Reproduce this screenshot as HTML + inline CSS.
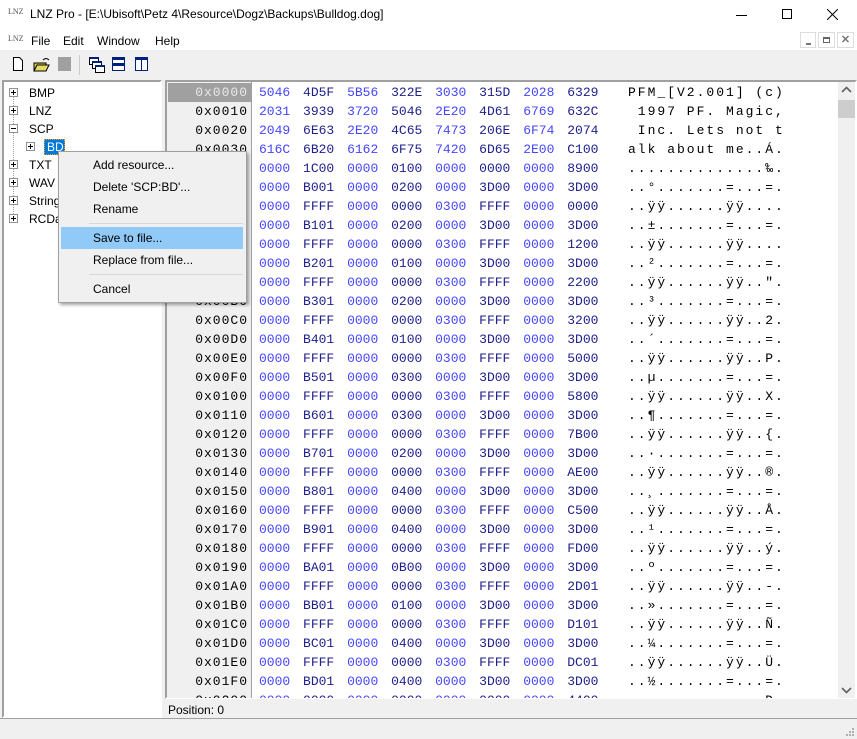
<!DOCTYPE html>
<html><head><meta charset="utf-8"><style>
*{margin:0;padding:0;box-sizing:border-box}
body{width:857px;height:739px;background:#f0f0f0;font-family:"Liberation Sans",sans-serif;font-size:12px;color:#000;position:relative;overflow:hidden}
.a{position:absolute}
.mono{font-family:"Liberation Mono",monospace;font-size:13px;white-space:pre}
.row{position:absolute;height:19px;line-height:19px}
.b{color:#4646ff}.d{color:#1e1e8c}
.mi{position:absolute;left:93px;font-size:12px}
.pl{position:absolute;left:9px;width:9px;height:9px;border:1px solid #919191;background:#fff}
.pl:before{content:"";position:absolute;left:1px;top:3px;width:5px;height:1px;background:#000}
.pl.p:after{content:"";position:absolute;left:3px;top:1px;width:1px;height:5px;background:#000}
.ti{position:absolute;left:29px;font-size:12px}
</style></head><body>
<!-- title bar -->
<div class="a" style="left:0;top:0;width:857px;height:30px;background:#fff"></div>
<div class="a" style="left:8px;top:7px;font-size:8px;color:#555;font-family:'Liberation Serif',serif">LNZ</div>
<div class="a" style="left:30px;top:7px;font-size:12px">LNZ Pro - [E:\Ubisoft\Petz 4\Resource\Dogz\Backups\Bulldog.dog]</div>
<div class="a" style="left:736px;top:15px;width:11px;height:1px;background:#000"></div>
<div class="a" style="left:782px;top:9px;width:10px;height:10px;border:1px solid #000"></div>
<svg class="a" style="left:827px;top:9px" width="11" height="11"><path d="M0 0L11 11M11 0L0 11" stroke="#000"/></svg>
<!-- menu -->
<div class="a" style="left:0;top:30px;width:857px;height:20px;background:#fff"></div>
<div class="a" style="left:8px;top:34px;font-size:8px;color:#555;font-family:'Liberation Serif',serif">LNZ</div>
<div class="a" style="left:31px;top:34px">File</div>
<div class="a" style="left:63px;top:34px">Edit</div>
<div class="a" style="left:97px;top:34px">Window</div>
<div class="a" style="left:155px;top:34px">Help</div>
<div class="a" style="left:800px;top:32px;width:16px;height:16px;border:1px solid #ddd"></div>
<div class="a" style="left:806px;top:43px;width:5px;height:2px;background:#777"></div>
<div class="a" style="left:818px;top:32px;width:17px;height:16px;border:1px solid #ddd"></div>
<div class="a" style="left:823px;top:37px;width:7px;height:6px;border:1px solid #666;border-top-width:2px"></div>
<div class="a" style="left:837px;top:32px;width:17px;height:16px;border:1px solid #ddd;color:#777;font-weight:bold;font-size:11px;text-align:center;line-height:14px">✕</div>
<!-- toolbar -->
<svg class="a" style="left:10px;top:55px" width="150" height="20">
<path d="M3.5 2.5h6l3 3v10h-9z" fill="#fff" stroke="#000"/>
<path d="M24 8h12v8h-12z" fill="#d8c64a" stroke="#000"/><path d="M24 16l3-6h12l-3 6z" fill="#e6dc6a" stroke="#000"/><path d="M33 5q3-3 6 0" stroke="#000" fill="none"/>
<rect x="48" y="2" width="13" height="14" fill="#a0a0a0"/>
<rect x="69" y="0" width="1" height="20" fill="#ccc"/>
<rect x="79.5" y="2.5" width="9" height="7" fill="#fff" stroke="#000"/><rect x="82.5" y="6.5" width="9" height="7" fill="#fff" stroke="#000"/><rect x="85.5" y="10.5" width="9" height="7" fill="#fff" stroke="#000"/>
<rect x="79" y="2" width="10" height="2" fill="#002080"/><rect x="82" y="6" width="10" height="2" fill="#002080"/><rect x="85" y="10" width="10" height="2" fill="#002080"/>
<rect x="102.5" y="2.5" width="12" height="13" fill="#fff" stroke="#002080"/><rect x="102" y="2" width="13" height="3" fill="#002080"/><rect x="102" y="8" width="13" height="3" fill="#002080"/>
<rect x="125.5" y="2.5" width="12" height="13" fill="#fff" stroke="#002080"/><rect x="125" y="2" width="13" height="3" fill="#002080"/><rect x="131" y="2" width="1" height="14" fill="#002080"/>
</svg>
<!-- tree -->
<div class="a" style="left:2px;top:80px;width:160px;height:638px;background:#fff;border:2px solid #a0a0a0;border-right-color:#fff;border-bottom-color:#fff;border-left-color:#a0a0a0"></div>
<div class="a" style="left:13px;top:96px;height:124px;border-left:1px dotted #a0a0a0"></div>
<div class="pl p" style="top:88px"></div><div class="ti" style="top:86px">BMP</div>
<div class="pl p" style="top:106px"></div><div class="ti" style="top:104px">LNZ</div>
<div class="pl" style="top:124px"></div><div class="ti" style="top:122px">SCP</div>
<div class="pl p" style="left:26px;top:142px"></div>
<div class="a" style="left:44px;top:139px;width:21px;height:16px;background:#0078d7;border:1px dotted #f0a000;color:#fff;padding-left:2px;line-height:14px">BD</div>
<div class="pl p" style="top:160px"></div><div class="ti" style="top:158px">TXT</div>
<div class="pl p" style="top:178px"></div><div class="ti" style="top:176px">WAV</div>
<div class="pl p" style="top:196px"></div><div class="ti" style="top:194px">String</div>
<div class="pl p" style="top:214px"></div><div class="ti" style="top:212px">RCData</div>
<!-- hex pane -->
<div class="a" style="left:165px;top:80px;width:692px;height:619px;background:#fff;border:2px solid #a0a0a0;border-right-color:#fff;border-bottom-color:#fff"></div>
<div class="a" style="left:167px;top:82px;width:85px;height:616px;background:#f0f0f0;border-right:1px solid #a0a0a0"></div>
<div class="a" style="left:168px;top:83px;width:83px;height:19px;background:#a0a0a0"></div>
<div class="a" style="left:838px;top:82px;width:17px;height:616px;background:#f0f0f0"></div>
<div class="a" style="left:838px;top:100px;width:17px;height:18px;background:#cdcdcd"></div>
<svg class="a" style="left:841px;top:86px" width="11" height="8"><path d="M1 6l4.5-4.5L10 6" stroke="#606060" stroke-width="1.6" fill="none"/></svg>
<svg class="a" style="left:841px;top:686px" width="11" height="8"><path d="M1 2l4.5 4.5L10 2" stroke="#606060" stroke-width="1.6" fill="none"/></svg>
<div class="a mono" style="left:168px;top:83px;width:670px;height:615px;overflow:hidden;line-height:19px">
<div style="position:absolute;left:0;top:0;width:80px;text-align:right;letter-spacing:1px"><span style="color:#e8e8e8">0x0000</span>
0x0010
0x0020
0x0030
0x0040
0x0050
0x0060
0x0070
0x0080
0x0090
0x00A0
0x00B0
0x00C0
0x00D0
0x00E0
0x00F0
0x0100
0x0110
0x0120
0x0130
0x0140
0x0150
0x0160
0x0170
0x0180
0x0190
0x01A0
0x01B0
0x01C0
0x01D0
0x01E0
0x01F0
0x0200</div>
<div style="position:absolute;left:91px;top:0;word-spacing:5px" id="h"><span class="b">5046</span> <span class="d">4D5F</span> <span class="b">5B56</span> <span class="d">322E</span> <span class="b">3030</span> <span class="d">315D</span> <span class="b">2028</span> <span class="d">6329</span>
<span class="b">2031</span> <span class="d">3939</span> <span class="b">3720</span> <span class="d">5046</span> <span class="b">2E20</span> <span class="d">4D61</span> <span class="b">6769</span> <span class="d">632C</span>
<span class="b">2049</span> <span class="d">6E63</span> <span class="b">2E20</span> <span class="d">4C65</span> <span class="b">7473</span> <span class="d">206E</span> <span class="b">6F74</span> <span class="d">2074</span>
<span class="b">616C</span> <span class="d">6B20</span> <span class="b">6162</span> <span class="d">6F75</span> <span class="b">7420</span> <span class="d">6D65</span> <span class="b">2E00</span> <span class="d">C100</span>
<span class="b">0000</span> <span class="d">1C00</span> <span class="b">0000</span> <span class="d">0100</span> <span class="b">0000</span> <span class="d">0000</span> <span class="b">0000</span> <span class="d">8900</span>
<span class="b">0000</span> <span class="d">B001</span> <span class="b">0000</span> <span class="d">0200</span> <span class="b">0000</span> <span class="d">3D00</span> <span class="b">0000</span> <span class="d">3D00</span>
<span class="b">0000</span> <span class="d">FFFF</span> <span class="b">0000</span> <span class="d">0000</span> <span class="b">0300</span> <span class="d">FFFF</span> <span class="b">0000</span> <span class="d">0000</span>
<span class="b">0000</span> <span class="d">B101</span> <span class="b">0000</span> <span class="d">0200</span> <span class="b">0000</span> <span class="d">3D00</span> <span class="b">0000</span> <span class="d">3D00</span>
<span class="b">0000</span> <span class="d">FFFF</span> <span class="b">0000</span> <span class="d">0000</span> <span class="b">0300</span> <span class="d">FFFF</span> <span class="b">0000</span> <span class="d">1200</span>
<span class="b">0000</span> <span class="d">B201</span> <span class="b">0000</span> <span class="d">0100</span> <span class="b">0000</span> <span class="d">3D00</span> <span class="b">0000</span> <span class="d">3D00</span>
<span class="b">0000</span> <span class="d">FFFF</span> <span class="b">0000</span> <span class="d">0000</span> <span class="b">0300</span> <span class="d">FFFF</span> <span class="b">0000</span> <span class="d">2200</span>
<span class="b">0000</span> <span class="d">B301</span> <span class="b">0000</span> <span class="d">0200</span> <span class="b">0000</span> <span class="d">3D00</span> <span class="b">0000</span> <span class="d">3D00</span>
<span class="b">0000</span> <span class="d">FFFF</span> <span class="b">0000</span> <span class="d">0000</span> <span class="b">0300</span> <span class="d">FFFF</span> <span class="b">0000</span> <span class="d">3200</span>
<span class="b">0000</span> <span class="d">B401</span> <span class="b">0000</span> <span class="d">0100</span> <span class="b">0000</span> <span class="d">3D00</span> <span class="b">0000</span> <span class="d">3D00</span>
<span class="b">0000</span> <span class="d">FFFF</span> <span class="b">0000</span> <span class="d">0000</span> <span class="b">0300</span> <span class="d">FFFF</span> <span class="b">0000</span> <span class="d">5000</span>
<span class="b">0000</span> <span class="d">B501</span> <span class="b">0000</span> <span class="d">0300</span> <span class="b">0000</span> <span class="d">3D00</span> <span class="b">0000</span> <span class="d">3D00</span>
<span class="b">0000</span> <span class="d">FFFF</span> <span class="b">0000</span> <span class="d">0000</span> <span class="b">0300</span> <span class="d">FFFF</span> <span class="b">0000</span> <span class="d">5800</span>
<span class="b">0000</span> <span class="d">B601</span> <span class="b">0000</span> <span class="d">0300</span> <span class="b">0000</span> <span class="d">3D00</span> <span class="b">0000</span> <span class="d">3D00</span>
<span class="b">0000</span> <span class="d">FFFF</span> <span class="b">0000</span> <span class="d">0000</span> <span class="b">0300</span> <span class="d">FFFF</span> <span class="b">0000</span> <span class="d">7B00</span>
<span class="b">0000</span> <span class="d">B701</span> <span class="b">0000</span> <span class="d">0200</span> <span class="b">0000</span> <span class="d">3D00</span> <span class="b">0000</span> <span class="d">3D00</span>
<span class="b">0000</span> <span class="d">FFFF</span> <span class="b">0000</span> <span class="d">0000</span> <span class="b">0300</span> <span class="d">FFFF</span> <span class="b">0000</span> <span class="d">AE00</span>
<span class="b">0000</span> <span class="d">B801</span> <span class="b">0000</span> <span class="d">0400</span> <span class="b">0000</span> <span class="d">3D00</span> <span class="b">0000</span> <span class="d">3D00</span>
<span class="b">0000</span> <span class="d">FFFF</span> <span class="b">0000</span> <span class="d">0000</span> <span class="b">0300</span> <span class="d">FFFF</span> <span class="b">0000</span> <span class="d">C500</span>
<span class="b">0000</span> <span class="d">B901</span> <span class="b">0000</span> <span class="d">0400</span> <span class="b">0000</span> <span class="d">3D00</span> <span class="b">0000</span> <span class="d">3D00</span>
<span class="b">0000</span> <span class="d">FFFF</span> <span class="b">0000</span> <span class="d">0000</span> <span class="b">0300</span> <span class="d">FFFF</span> <span class="b">0000</span> <span class="d">FD00</span>
<span class="b">0000</span> <span class="d">BA01</span> <span class="b">0000</span> <span class="d">0B00</span> <span class="b">0000</span> <span class="d">3D00</span> <span class="b">0000</span> <span class="d">3D00</span>
<span class="b">0000</span> <span class="d">FFFF</span> <span class="b">0000</span> <span class="d">0000</span> <span class="b">0300</span> <span class="d">FFFF</span> <span class="b">0000</span> <span class="d">2D01</span>
<span class="b">0000</span> <span class="d">BB01</span> <span class="b">0000</span> <span class="d">0100</span> <span class="b">0000</span> <span class="d">3D00</span> <span class="b">0000</span> <span class="d">3D00</span>
<span class="b">0000</span> <span class="d">FFFF</span> <span class="b">0000</span> <span class="d">0000</span> <span class="b">0300</span> <span class="d">FFFF</span> <span class="b">0000</span> <span class="d">D101</span>
<span class="b">0000</span> <span class="d">BC01</span> <span class="b">0000</span> <span class="d">0400</span> <span class="b">0000</span> <span class="d">3D00</span> <span class="b">0000</span> <span class="d">3D00</span>
<span class="b">0000</span> <span class="d">FFFF</span> <span class="b">0000</span> <span class="d">0000</span> <span class="b">0300</span> <span class="d">FFFF</span> <span class="b">0000</span> <span class="d">DC01</span>
<span class="b">0000</span> <span class="d">BD01</span> <span class="b">0000</span> <span class="d">0400</span> <span class="b">0000</span> <span class="d">3D00</span> <span class="b">0000</span> <span class="d">3D00</span>
<span class="b">0000</span> <span class="d">0000</span> <span class="b">0000</span> <span class="d">0000</span> <span class="b">0000</span> <span class="d">0000</span> <span class="b">0000</span> <span class="d">4400</span></div>
<div style="position:absolute;left:460px;top:0;letter-spacing:2px">PFM_[V2.001] (c)
 1997 PF. Magic,
 Inc. Lets not t
alk about me..Á.
..............‰.
..°.......=...=.
..ÿÿ......ÿÿ....
..±.......=...=.
..ÿÿ......ÿÿ....
..².......=...=.
..ÿÿ......ÿÿ..".
..³.......=...=.
..ÿÿ......ÿÿ..2.
..´.......=...=.
..ÿÿ......ÿÿ..P.
..µ.......=...=.
..ÿÿ......ÿÿ..X.
..¶.......=...=.
..ÿÿ......ÿÿ..{.
..·.......=...=.
..ÿÿ......ÿÿ..®.
..¸.......=...=.
..ÿÿ......ÿÿ..Å.
..¹.......=...=.
..ÿÿ......ÿÿ..ý.
..º.......=...=.
..ÿÿ......ÿÿ..-.
..».......=...=.
..ÿÿ......ÿÿ..Ñ.
..¼.......=...=.
..ÿÿ......ÿÿ..Ü.
..½.......=...=.
..............D.</div>
</div>
<!-- position status -->
<div class="a" style="left:168px;top:703px">Position: 0</div>
<div class="a" style="left:0;top:718px;width:857px;height:1px;background:#a0a0a0"></div>
<svg class="a" style="left:845px;top:727px" width="10" height="10"><g fill="#b0b0b0"><rect x="7" y="1" width="2" height="2"/><rect x="4" y="4" width="2" height="2"/><rect x="7" y="4" width="2" height="2"/><rect x="1" y="7" width="2" height="2"/><rect x="4" y="7" width="2" height="2"/><rect x="7" y="7" width="2" height="2"/></g></svg>
<!-- context menu -->
<div class="a" style="left:58px;top:151px;width:189px;height:152px;background:#f0f0f0;border:1px solid #a0a0a0;box-shadow:2px 2px 3px rgba(0,0,0,.35)"></div>
<div class="a" style="left:61px;top:227px;width:182px;height:22px;background:#91c9f7"></div>
<div class="a" style="left:89px;top:223px;width:154px;height:1px;background:#d7d7d7"></div>
<div class="a" style="left:89px;top:274px;width:154px;height:1px;background:#d7d7d7"></div>
<div class="mi" style="top:158px">Add resource...</div>
<div class="mi" style="top:180px">Delete 'SCP:BD'...</div>
<div class="mi" style="top:202px">Rename</div>
<div class="mi" style="top:231px">Save to file...</div>
<div class="mi" style="top:253px">Replace from file...</div>
<div class="mi" style="top:282px">Cancel</div>
</body></html>
